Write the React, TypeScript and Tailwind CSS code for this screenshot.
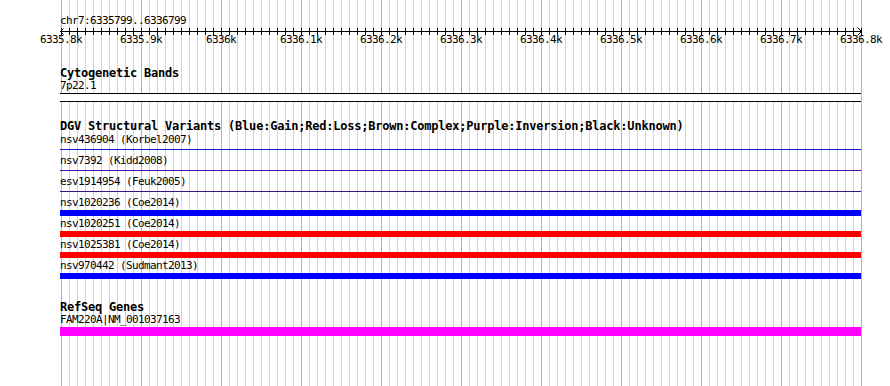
import React from "react";

const MONO = "font-['DejaVu_Sans_Mono',monospace]";
const TICKS = Array.from({ length: 101 }, (_, k) => 61 + 8 * k);
const LABELS = [
  "6335.8k",
  "6335.9k",
  "6336k",
  "6336.1k",
  "6336.2k",
  "6336.3k",
  "6336.4k",
  "6336.5k",
  "6336.6k",
  "6336.7k",
  "6336.8k",
];

function Grid() {
  return (
    <div className="absolute top-0 bottom-0 left-[61px] flex gap-[7px]">
      {TICKS.map((_, k) => (
        <div
          key={k}
          className={k % 10 === 0 ? "w-px h-full bg-[#84c2ee]" : "w-px h-full bg-[#a4e6ee]"}
        />
      ))}
    </div>
  );
}

function Ruler() {
  return (
    <svg width={890} height={20} className="block">
      <rect x={60} y={4} width={801} height={1} fill="#000" shapeRendering="crispEdges" />
      {TICKS.map((x, k) => (
        <rect key={k} x={x} y={1} width={1} height={7} fill="#000" shapeRendering="crispEdges" />
      ))}
      <path d="M63.5 1.5 L60.5 4.5 L63.5 7.5" stroke="#000" fill="none" strokeWidth={1} />
      <path d="M857.5 0.5 L861.5 4.5 L857.5 8.5" stroke="#000" fill="none" strokeWidth={1} />
      {LABELS.map((l, j) => (
        <text
          key={l}
          x={61 + 80 * j}
          y={16}
          textAnchor="middle"
          fontFamily="DejaVu Sans Mono, monospace"
          fontSize={11}
          letterSpacing={-0.62}
          fill="#000"
        >
          {l}
        </text>
      ))}
    </svg>
  );
}

function Small({ children }: { children: React.ReactNode }) {
  return (
    <div
      className={`${MONO} text-[11px] leading-[12px] h-[12px] tracking-[-0.62px] text-black whitespace-nowrap`}
    >
      {children}
    </div>
  );
}

function Bold({ children }: { children: React.ReactNode }) {
  return (
    <div
      className={`${MONO} font-bold text-[12px] leading-[13px] h-[13px] tracking-[-0.22px] text-black whitespace-nowrap`}
    >
      {children}
    </div>
  );
}

function LineRow({ label, color }: { label: string; color: string }) {
  return (
    <div className="flex flex-col h-[21px]">
      <Small>{label}</Small>
      <div className="h-[3px]" />
      <div className="h-[1px] w-[801px]" style={{ backgroundColor: color }} />
    </div>
  );
}

function BarRow({ label, cls }: { label: string; cls: string }) {
  return (
    <div className="flex flex-col h-[21px]">
      <Small>{label}</Small>
      <div className="h-[1px]" />
      <div className={`h-[6px] w-[801px] ${cls}`} />
    </div>
  );
}

export default function App() {
  return (
    <div className="relative w-[890px] h-[386px] bg-white overflow-hidden">
      <Grid />
      <div className="relative flex flex-col">
        <div className="h-[15px]" />
        <div className="pl-[60px]">
          <Small>chr7:6335799..6336799</Small>
        </div>
        <Ruler />
        <div className="flex flex-col pl-[60px]">
          <div className="h-[20px]" />
          <Bold>Cytogenetic Bands</Bold>
          <Small>7p22.1</Small>
          <div className="h-[1px]" />
          <div className="h-[9px] w-[801px] bg-white border-y border-black" />
          <div className="h-[18px]" />
          <Bold>
            DGV Structural Variants (Blue:Gain;Red:Loss;Brown:Complex;Purple:Inversion;Black:Unknown)
          </Bold>
          <div className="h-[1px]" />
          <LineRow label="nsv436904 (Korbel2007)" color="#1818d0" />
          <LineRow label="nsv7392 (Kidd2008)" color="#5010a8" />
          <LineRow label="esv1914954 (Feuk2005)" color="#381488" />
          <BarRow label="nsv1020236 (Coe2014)" cls="bg-[#0000ff]" />
          <BarRow label="nsv1020251 (Coe2014)" cls="bg-[#ff0000]" />
          <BarRow label="nsv1025381 (Coe2014)" cls="bg-[#ff0000]" />
          <BarRow label="nsv970442 (Sudmant2013)" cls="bg-[#0000ff]" />
          <div className="h-[20px]" />
          <Bold>RefSeq Genes</Bold>
          <Small>FAM220A|NM_001037163</Small>
          <div className="h-[1px]" />
          <div className="h-[9px] w-[801px] bg-[#ff00ff]" />
        </div>
      </div>
    </div>
  );
}
